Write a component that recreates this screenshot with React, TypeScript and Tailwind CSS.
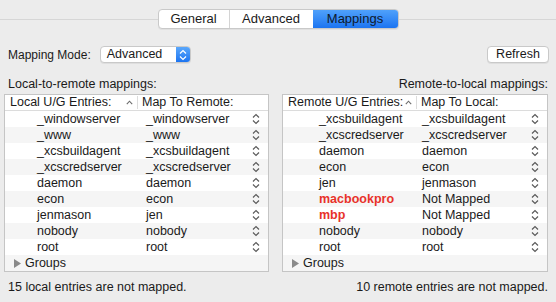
import React from 'react'

type Row = { entry: string; map: string; red?: boolean }

const localRows: Row[] = [
  { entry: '_windowserver', map: '_windowserver' },
  { entry: '_www', map: '_www' },
  { entry: '_xcsbuildagent', map: '_xcsbuildagent' },
  { entry: '_xcscredserver', map: '_xcscredserver' },
  { entry: 'daemon', map: 'daemon' },
  { entry: 'econ', map: 'econ' },
  { entry: 'jenmason', map: 'jen' },
  { entry: 'nobody', map: 'nobody' },
  { entry: 'root', map: 'root' },
]

const remoteRows: Row[] = [
  { entry: '_xcsbuildagent', map: '_xcsbuildagent' },
  { entry: '_xcscredserver', map: '_xcscredserver' },
  { entry: 'daemon', map: 'daemon' },
  { entry: 'econ', map: 'econ' },
  { entry: 'jen', map: 'jenmason' },
  { entry: 'macbookpro', map: 'Not Mapped', red: true },
  { entry: 'mbp', map: 'Not Mapped', red: true },
  { entry: 'nobody', map: 'nobody' },
  { entry: 'root', map: 'root' },
]

const Stepper = ({ color = '#5a5a5a' }: { color?: string }) => (
  <svg width="8" height="12" viewBox="0 0 8 12" fill="none" stroke={color} strokeWidth="1.2">
    <path d="M1 4.5 L4 1.5 L7 4.5" />
    <path d="M1 7.5 L4 10.5 L7 7.5" />
  </svg>
)

const Caret = () => (
  <svg width="7" height="5" viewBox="0 0 7 5" fill="none" stroke="#6b6b6b" strokeWidth="1.1">
    <path d="M0.8 4.2 L3.5 1.2 L6.2 4.2" />
  </svg>
)

type TableProps = {
  rows: Row[]
  entryHead: string
  mapHead: string
  entryW: string
  entryPad: string
  mapPad: string
  groupsPad: string
}

const MappingTable = ({ rows, entryHead, mapHead, entryW, entryPad, mapPad, groupsPad }: TableProps) => (
  <div className="border border-[#c5c5c5] bg-white">
    <div className="flex h-[16px] border-b border-[#dcdcdc] text-[12.5px] leading-[15px] whitespace-nowrap text-[#1a1a1a]">
      <div className={`flex items-center justify-between pl-[5px] pr-[4px] ${entryW}`}>
        <span>{entryHead}</span>
        <Caret />
      </div>
      <div className="my-[1px] w-px bg-[#dcdcdc]" />
      <div className="flex items-center pl-[4px]">{mapHead}</div>
    </div>
    {rows.map((r, i) => (
      <div
        key={r.entry}
        className={`flex h-[16px] items-center whitespace-nowrap text-[12.5px] ${i % 2 === 1 ? 'bg-[#f5f5f5]' : 'bg-white'}`}
      >
        <div className={`${entryW} ${entryPad} ${r.red ? 'font-bold text-[#e8322a]' : 'text-[#1a1a1a]'}`}>
          {r.entry}
        </div>
        <div className={`flex-1 ${mapPad} text-[#1a1a1a]`}>{r.map}</div>
        <div className="flex w-[20px] justify-center pr-[4px]">
          <Stepper />
        </div>
      </div>
    ))}
    <div className="flex h-[16px] items-center bg-[#f5f5f5] text-[12.5px] text-[#1a1a1a]">
      <div className={`flex items-center gap-[4px] ${groupsPad}`}>
        <svg width="7" height="9" viewBox="0 0 7 9">
          <path d="M0 0 L7 4.5 L0 9 Z" fill="#8a8a8a" />
        </svg>
        <span>Groups</span>
      </div>
    </div>
  </div>
)

export default function App() {
  return (
    <div
      className="flex h-[302px] w-[556px] flex-col overflow-hidden bg-[#ececec] text-[12px] text-[#1a1a1a]"
      style={{ fontFamily: '"Liberation Sans", Arial, sans-serif' }}
    >
      <div className="relative flex h-[38px] justify-center pt-[9px]">
        <div className="absolute left-0 right-0 top-[19px] h-px bg-[#d6d6d6]" />
        <div className="relative flex h-[20px] overflow-hidden rounded-[4px] border border-[#c9c9c9] bg-white text-[13px] shadow-[0_1px_0_rgba(0,0,0,0.05)]">
          <div className="flex w-[71px] items-center justify-center border-r border-[#d4d4d4]">General</div>
          <div className="flex w-[83px] items-center justify-center">Advanced</div>
          <div className="flex w-[85px] items-center justify-center bg-gradient-to-b from-[#4fa1fb] to-[#1b74f1] text-[#0f1a2c]">
            Mappings
          </div>
        </div>
      </div>

      <div className="mt-[8px] flex h-[17px] items-center justify-between pl-[8px] pr-[7px]">
        <div className="flex items-center gap-[9px]">
          <span className="text-[12px]">Mapping Mode:</span>
          <div className="flex h-[17px] w-[91px] items-stretch overflow-hidden rounded-[4px] border border-[#c9c9c9] bg-white text-[12.5px] shadow-[0_1px_0_rgba(0,0,0,0.06)]">
            <div className="flex flex-1 items-center pl-[6px]">Advanced</div>
            <div className="flex w-[14px] items-center justify-center bg-gradient-to-b from-[#5aa7fb] to-[#1b74f1]">
              <Stepper color="#ffffff" />
            </div>
          </div>
        </div>
        <div className="flex h-[17px] w-[62px] items-center justify-center rounded-[4px] border border-[#c9c9c9] bg-white text-[12.5px] shadow-[0_1px_0_rgba(0,0,0,0.06)]">
          Refresh
        </div>
      </div>

      <div className="mt-[14px] flex justify-between pl-[8px] pr-[8px] text-[12.5px] leading-[15px]">
        <span>Local-to-remote mappings:</span>
        <span>Remote-to-local mappings:</span>
      </div>

      <div className="mt-[2px] flex gap-[13px] pl-[4px] pr-[8px]">
        <div className="w-[265px]">
          <MappingTable
            rows={localRows}
            entryHead="Local U/G Entries:"
            mapHead="Map To Remote:"
            entryW="w-[132px]"
            entryPad="pl-[32px]"
            mapPad="pl-[9px]"
            groupsPad="pl-[9px]"
          />
        </div>
        <div className="w-[266px]">
          <MappingTable
            rows={remoteRows}
            entryHead="Remote U/G Entries:"
            mapHead="Map To Local:"
            entryW="w-[133px]"
            entryPad="pl-[36px]"
            mapPad="pl-[6px]"
            groupsPad="pl-[9px]"
          />
        </div>
      </div>

      <div className="mt-[8px] flex justify-between pl-[8px] pr-[8px] text-[12.5px] leading-[15px]">
        <span>15 local entries are not mapped.</span>
        <span>10 remote entries are not mapped.</span>
      </div>
    </div>
  )
}
